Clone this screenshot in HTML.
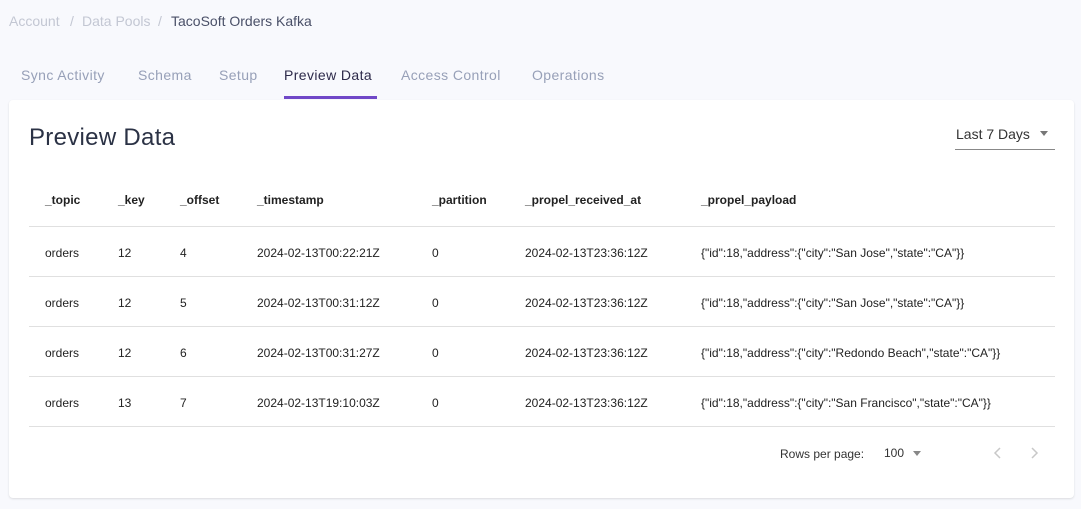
<!DOCTYPE html>
<html><head><style>
body{margin:0;width:1081px;height:509px;background:#f8f9fd;font-family:"Liberation Sans",sans-serif;position:relative;overflow:hidden}
.a{position:absolute;white-space:nowrap}
.bc{top:13px;font-size:14px;color:#c3c7d3}
.tab{top:67px;font-size:14px;color:#97a0b8;letter-spacing:0.4px}
.card{position:absolute;left:9px;top:100px;width:1065px;height:398px;background:#fff;border-radius:4px;box-shadow:0 1px 2px rgba(0,0,0,.12)}
.h{font-size:12px;font-weight:bold;color:#222}
.c{font-size:12px;color:#222}
.line{position:absolute;left:29px;width:1026px;height:1px;background:#e0e0e0}
</style></head><body>
<div class="a bc" style="left:9px">Account</div>
<div class="a bc" style="left:70px">/</div>
<div class="a bc" style="left:82px">Data Pools</div>
<div class="a bc" style="left:158px">/</div>
<div class="a bc" style="left:171px;color:#4a5068">TacoSoft Orders Kafka</div>
<div class="a tab" style="left:21px">Sync Activity</div>
<div class="a tab" style="left:138px">Schema</div>
<div class="a tab" style="left:219px">Setup</div>
<div class="a tab" style="left:284px;color:#2d2a4a">Preview Data</div>
<div class="a" style="left:284px;top:96px;width:93px;height:3px;background:#7048c8"></div>
<div class="a tab" style="left:401px">Access Control</div>
<div class="a tab" style="left:532px">Operations</div>
<div class="card"></div>
<div class="a" style="left:29px;top:124px;font-size:24px;color:#2b3245;letter-spacing:0.3px">Preview Data</div>
<div class="a" style="left:956px;top:126px;font-size:14px;color:#333">Last 7 Days</div>
<div class="a" style="left:1040px;top:131px;border:4px solid transparent;border-top:5px solid #777"></div>
<div class="a" style="left:955px;top:149px;width:100px;height:1px;background:#888"></div>
<div class="a h" style="left:45px;top:193px">_topic</div>
<div class="a h" style="left:118px;top:193px">_key</div>
<div class="a h" style="left:180px;top:193px">_offset</div>
<div class="a h" style="left:257px;top:193px">_timestamp</div>
<div class="a h" style="left:432px;top:193px">_partition</div>
<div class="a h" style="left:525px;top:193px">_propel_received_at</div>
<div class="a h" style="left:701px;top:193px">_propel_payload</div>
<div class="line" style="top:226px"></div>
<div class="line" style="top:276px"></div>
<div class="line" style="top:326px"></div>
<div class="line" style="top:376px"></div>
<div class="line" style="top:426px"></div>

<div class="a c" style="left:45px;top:246px">orders</div><div class="a c" style="left:118px;top:246px">12</div><div class="a c" style="left:180px;top:246px">4</div><div class="a c" style="left:257px;top:246px">2024-02-13T00:22:21Z</div><div class="a c" style="left:432px;top:246px">0</div><div class="a c" style="left:525px;top:246px">2024-02-13T23:36:12Z</div><div class="a c" style="left:701px;top:246px">{"id":18,"address":{"city":"San Jose","state":"CA"}}</div>
<div class="a c" style="left:45px;top:296px">orders</div><div class="a c" style="left:118px;top:296px">12</div><div class="a c" style="left:180px;top:296px">5</div><div class="a c" style="left:257px;top:296px">2024-02-13T00:31:12Z</div><div class="a c" style="left:432px;top:296px">0</div><div class="a c" style="left:525px;top:296px">2024-02-13T23:36:12Z</div><div class="a c" style="left:701px;top:296px">{"id":18,"address":{"city":"San Jose","state":"CA"}}</div>
<div class="a c" style="left:45px;top:346px">orders</div><div class="a c" style="left:118px;top:346px">12</div><div class="a c" style="left:180px;top:346px">6</div><div class="a c" style="left:257px;top:346px">2024-02-13T00:31:27Z</div><div class="a c" style="left:432px;top:346px">0</div><div class="a c" style="left:525px;top:346px">2024-02-13T23:36:12Z</div><div class="a c" style="left:701px;top:346px">{"id":18,"address":{"city":"Redondo Beach","state":"CA"}}</div>
<div class="a c" style="left:45px;top:396px">orders</div><div class="a c" style="left:118px;top:396px">13</div><div class="a c" style="left:180px;top:396px">7</div><div class="a c" style="left:257px;top:396px">2024-02-13T19:10:03Z</div><div class="a c" style="left:432px;top:396px">0</div><div class="a c" style="left:525px;top:396px">2024-02-13T23:36:12Z</div><div class="a c" style="left:701px;top:396px">{"id":18,"address":{"city":"San Francisco","state":"CA"}}</div>

<div class="a c" style="left:780px;top:447px;color:#333">Rows per page:</div>
<div class="a c" style="left:884px;top:446px;color:#333">100</div>
<div class="a" style="left:913px;top:451px;border:4px solid transparent;border-top:5px solid #888"></div>
<svg class="a" style="left:991px;top:446px" width="14" height="14"><path d="M9 2L4 7l5 5" fill="none" stroke="#c8c8c8" stroke-width="1.5"/></svg>
<svg class="a" style="left:1027px;top:446px" width="14" height="14"><path d="M5 2l5 5-5 5" fill="none" stroke="#c8c8c8" stroke-width="1.5"/></svg>
</body></html>
